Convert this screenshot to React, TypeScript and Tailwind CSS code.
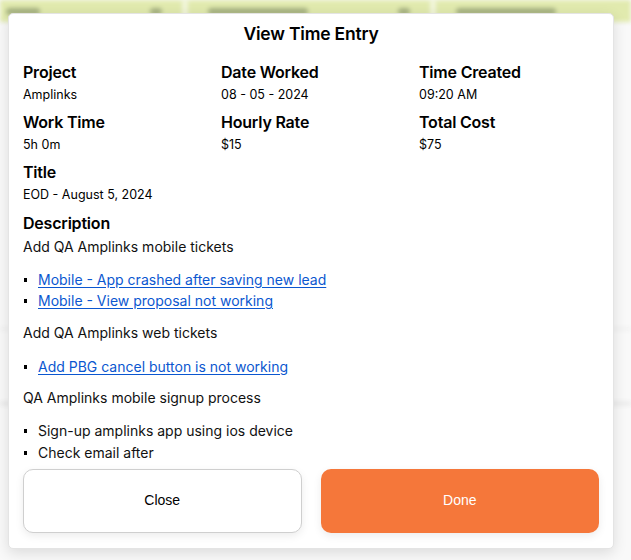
import React from 'react';

interface Field {
  label: string;
  value: string;
}

const fields: Field[] = [
  { label: 'Project', value: 'Amplinks' },
  { label: 'Date Worked', value: '08 - 05 - 2024' },
  { label: 'Time Created', value: '09:20 AM' },
  { label: 'Work Time', value: '5h 0m' },
  { label: 'Hourly Rate', value: '$15' },
  { label: 'Total Cost', value: '$75' },
];

function Bullet({ children }: { children: React.ReactNode }) {
  return (
    <li className="flex items-center h-[21.5px]">
      <span className="w-[3px] h-[4px] bg-black ml-[1px] mr-[11px] shrink-0"></span>
      {children}
    </li>
  );
}

function TicketLink({ children }: { children: React.ReactNode }) {
  return (
    <a href="#" className="text-[#0b57d0] underline underline-offset-[2px]">
      {children}
    </a>
  );
}

export default function App() {
  return (
    <div
      className="relative w-[631px] h-[560px] overflow-hidden bg-[#f9f9f9]"
      style={{ fontFamily: 'Inter, "Noto Sans", sans-serif' }}
    >
      {/* Blurred page behind the modal */}
      <div className="blur-[2px]">
        <div className="h-[22px] bg-[#e1eaae] flex items-center text-[11px] text-[#8c9a66]">
          <span className="ml-[6px] w-[34px] h-[7px] bg-[#a7b382] rounded"></span>
          <span className="ml-[110px] w-[12px] h-[7px] bg-[#a7b382] rounded"></span>
          <span className="ml-[20px] w-[6px] h-[20px] bg-[#f2f6dc]"></span>
          <span className="ml-[20px] w-[100px] h-[7px] bg-[#a7b382] rounded"></span>
          <span className="ml-[90px] w-[12px] h-[7px] bg-[#a7b382] rounded"></span>
          <span className="ml-[20px] w-[6px] h-[20px] bg-[#f2f6dc]"></span>
          <span className="ml-[20px] w-[100px] h-[7px] bg-[#a7b382] rounded"></span>
        </div>
        <div className="h-[306px]"></div>
        <div className="h-[2px] bg-[#ececec]"></div>
        <div className="h-[72px]"></div>
        <div className="h-[3px] bg-[#e6e6e6]"></div>
      </div>

      {/* Modal */}
      <div className="absolute left-[8px] top-[13px] w-[606px] bg-white rounded-[5px] border border-[#e4e4e4] shadow-[0_4px_14px_rgba(0,0,0,0.12)] px-[14px] pt-[8px] pb-[15px] text-black">
        <h2 className="text-center text-[17.5px] font-semibold leading-[24px] tracking-[-0.2px]">View Time Entry</h2>

        <div className="grid grid-cols-3 gap-x-[18px] mt-[15px]">
          {fields.map((f) => (
            <div key={f.label} className="h-[50px]">
              <div className="text-[16px] font-semibold leading-[22px] tracking-[-0.2px]">{f.label}</div>
              <div className="text-[12.5px] leading-[18px] mt-[3px]">{f.value}</div>
            </div>
          ))}
        </div>

        <div className="h-[51px]">
          <div className="text-[16px] font-semibold leading-[22px] tracking-[-0.2px]">Title</div>
          <div className="text-[12.5px] leading-[18px] mt-[3px]">EOD - August 5, 2024</div>
        </div>

        <div className="text-[16px] font-semibold leading-[22px] tracking-[-0.2px]">Description</div>
        <div className="text-[14px] leading-[20px] text-[#111]">
          <p className="mt-[3px]">Add QA Amplinks mobile tickets</p>
          <ul className="mt-[12px]">
            <Bullet><TicketLink>Mobile - App crashed after saving new lead</TicketLink></Bullet>
            <Bullet><TicketLink>Mobile - View proposal not working</TicketLink></Bullet>
          </ul>
          <p className="mt-[11px]">Add QA Amplinks web tickets</p>
          <ul className="mt-[13px]">
            <Bullet><TicketLink>Add PBG cancel button is not working</TicketLink></Bullet>
          </ul>
          <p className="mt-[10px]">QA Amplinks mobile signup process</p>
          <ul className="mt-[13px]">
            <Bullet>Sign-up amplinks app using ios device</Bullet>
            <Bullet>Check email after</Bullet>
          </ul>
        </div>

        <div
          className="grid grid-cols-2 gap-x-[19px] mt-[5px]"
          style={{ fontFamily: '"Liberation Sans", Arial, sans-serif' }}
        >
          <button className="h-[64px] rounded-[10px] border border-[#cfcfcf] bg-white text-[14px] text-black shadow-[0_3px_8px_rgba(0,0,0,0.08)]">
            Close
          </button>
          <button className="h-[64px] rounded-[10px] bg-[#f5773a] text-[14px] text-white shadow-[0_3px_8px_rgba(0,0,0,0.08)]">
            Done
          </button>
        </div>
      </div>
    </div>
  );
}
